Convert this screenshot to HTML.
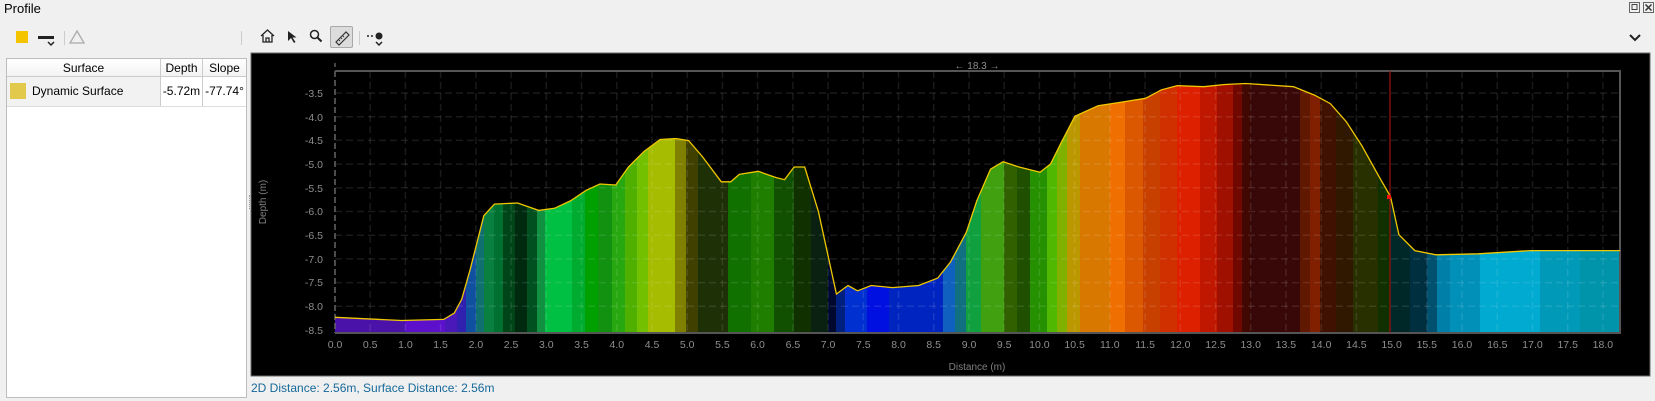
<!DOCTYPE html>
<html><head><meta charset="utf-8"><style>
*{margin:0;padding:0;box-sizing:border-box}
body{width:1655px;height:401px;background:#f0f0f0;font-family:"Liberation Sans","DejaVu Sans",sans-serif;position:relative;overflow:hidden;font-size:12px;color:#000}
.a{position:absolute}
</style></head><body>
<div class="a" style="left:4px;top:1px;font-size:13px">Profile</div>
<svg class="a" style="left:1628px;top:2px" width="27" height="12"><rect x="1.5" y="0.5" width="10" height="10" fill="none" stroke="#666"/><rect x="4" y="2.5" width="5" height="5" fill="none" stroke="#444"/><rect x="15.5" y="0.5" width="10" height="10" fill="none" stroke="#666"/><path d="M17.5 2.5l6 6M23.5 2.5l-6 6" stroke="#333" stroke-width="1.5"/></svg>
<div class="a" style="left:16px;top:31px;width:12px;height:12px;background:#f5c400"></div>
<svg class="a" style="left:38px;top:30px" width="20" height="18"><rect x="0" y="6" width="16" height="3" fill="#222"/><path d="M10 12l3 3 3-3" fill="none" stroke="#222" stroke-width="1.5"/></svg>
<div class="a" style="left:64px;top:31px;width:1px;height:14px;background:#ccc"></div>
<svg class="a" style="left:68px;top:29px" width="18" height="16"><path d="M9 2L16 14H2Z" fill="none" stroke="#aaa" stroke-width="1.3"/></svg>
<div class="a" style="left:241px;top:31px;width:1px;height:14px;background:#ccc"></div>
<svg class="a" style="left:259px;top:28px" width="18" height="16"><path d="M2 8L8.5 2 15 8M4 7v7h9V7M7 14v-4h3v4" fill="none" stroke="#222" stroke-width="1.3"/></svg>
<svg class="a" style="left:287px;top:30px" width="10" height="14"><path d="M1 1v10l3-3 3 5 1.5-1-3-4.5h4z" fill="#222"/></svg>
<svg class="a" style="left:309px;top:29px" width="14" height="14"><circle cx="5.5" cy="5.5" r="4" fill="none" stroke="#222" stroke-width="1.5"/><path d="M8.5 8.5l4 4" stroke="#222" stroke-width="2"/></svg>
<div class="a" style="left:330px;top:26px;width:23px;height:22px;background:#dcdcdc;border:1px solid #a8a8a8;border-radius:2px"></div>
<svg class="a" style="left:332px;top:28px" width="20" height="18"><path d="M4 14L14 4l3 3L7 17z" fill="none" stroke="#333" stroke-width="1.2"/><path d="M7 12l1 1M9 10l1 1M11 8l1 1" stroke="#333"/></svg>
<div class="a" style="left:359px;top:31px;width:1px;height:14px;background:#ccc"></div>
<svg class="a" style="left:366px;top:30px" width="26" height="20"><path d="M1 6h2M5 6h2" stroke="#222" stroke-width="1.5"/><circle cx="13" cy="6" r="3.5" fill="#222"/><path d="M10 12l3 3 3-3" fill="none" stroke="#222" stroke-width="1.5"/></svg>
<svg class="a" style="left:1628px;top:33px" width="14" height="10"><path d="M2 2l5 5 5-5" fill="none" stroke="#222" stroke-width="2"/></svg>
<div class="a" style="left:6px;top:58px;width:241px;height:340px;background:#fff;border:1px solid #bdbdbd"></div>
<div class="a" style="left:7px;top:59px;width:239px;height:18px;background:linear-gradient(#fff,#f3f3f3);border-bottom:1px solid #ccc"></div>
<div class="a" style="left:7px;top:61px;width:153px;text-align:center">Surface</div>
<div class="a" style="left:160px;top:59px;width:1px;height:47px;background:#ccc"></div>
<div class="a" style="left:160px;top:61px;width:43px;text-align:center">Depth</div>
<div class="a" style="left:202px;top:59px;width:1px;height:47px;background:#ccc"></div>
<div class="a" style="left:203px;top:61px;width:43px;text-align:center">Slope</div>
<div class="a" style="left:7px;top:77px;width:153px;height:29px;background:#f2f2f2"></div>
<div class="a" style="left:7px;top:106px;width:239px;height:1px;background:#ddd"></div>
<div class="a" style="left:10px;top:83px;width:16px;height:16px;background:#e2c94c"></div>
<div class="a" style="left:32px;top:84px">Dynamic Surface</div>
<div class="a" style="left:160px;top:84px;width:43px;text-align:center">-5.72m</div>
<div class="a" style="left:203px;top:84px;width:43px;text-align:center">-77.74°</div>
<div class="a" style="left:249px;top:195px;width:1px;height:14px;border-left:1px dotted #999"></div>
<div class="a" style="left:251px;top:381px;color:#17699a;font-size:12px">2D Distance: 2.56m, Surface Distance: 2.56m</div>
<svg class="a" style="left:0;top:0" width="1655" height="401" font-family="Liberation Sans, sans-serif">
<defs><clipPath id="c"><path d="M335,317.3 L401.5,320.5 443.7,319.4 454.3,313 461.7,299.3 470.1,269.7 483.8,215.7 494.4,204.1 517.6,203 538.7,210.4 554.5,208.3 570.4,200.9 586.2,190.3 599.9,184 615.8,185 628.4,167 644.3,151.2 660.1,139.5 675.9,138.5 688.6,140.6 702.3,156.5 721.3,181.8 730.8,181.8 739.3,174.4 758.2,171.3 776.2,177.6 784.6,179.7 794.1,167 804.7,167 818.4,211.5 836.4,294 848,285.5 857.5,290.8 871.2,285.5 892.3,287.6 918.7,285.5 937.7,278.1 950.4,262.2 966.2,232.6 976.8,200.9 990.5,169.2 1003.1,161.7 1019,167 1040.1,172.3 1050.6,163.9 1061.2,142.7 1074.9,116.3 1098.1,105.7 1119.2,102.5 1145.6,98.3 1161.5,89.8 1177.3,85.6 1203.7,86.7 1224.8,84.5 1245.9,83.5 1293.4,86.7 1314.5,95.1 1330.3,103.6 1346.2,121.6 1362,145.9 1377.8,174.4 1390.5,196.6 1398.9,234.7 1414.8,250.6 1435.9,254.8 1478.1,253.8 1530.9,250.6 1620,250.6 L1620,333 L335,333 Z"/></clipPath></defs>
<rect x="251" y="53" width="1399" height="323" fill="#000" stroke="#6a6a6a" stroke-width="1"/>
<g clip-path="url(#c)">
<rect x="335" y="70" width="70" height="264" fill="#4a12a8"/>
<rect x="405" y="70" width="40" height="264" fill="#5c10cc"/>
<rect x="445" y="70" width="12" height="264" fill="#4a18b8"/>
<rect x="457" y="70" width="9" height="264" fill="#3020b0"/>
<rect x="466" y="70" width="10" height="264" fill="#1050a0"/>
<rect x="476" y="70" width="8" height="264" fill="#107070"/>
<rect x="484" y="70" width="10" height="264" fill="#0a8040"/>
<rect x="494" y="70" width="9" height="264" fill="#007030"/>
<rect x="503" y="70" width="12" height="264" fill="#004518"/>
<rect x="515" y="70" width="12" height="264" fill="#002a10"/>
<rect x="527" y="70" width="10" height="264" fill="#005020"/>
<rect x="537" y="70" width="8" height="264" fill="#109040"/>
<rect x="545" y="70" width="27" height="264" fill="#00c044"/>
<rect x="572" y="70" width="13" height="264" fill="#00ac30"/>
<rect x="585" y="70" width="13" height="264" fill="#00a000"/>
<rect x="598" y="70" width="14" height="264" fill="#129010"/>
<rect x="612" y="70" width="13" height="264" fill="#28a810"/>
<rect x="625" y="70" width="12" height="264" fill="#50b000"/>
<rect x="637" y="70" width="11" height="264" fill="#72c000"/>
<rect x="648" y="70" width="27" height="264" fill="#a6bc00"/>
<rect x="675" y="70" width="11" height="264" fill="#808000"/>
<rect x="686" y="70" width="12" height="264" fill="#404000"/>
<rect x="698" y="70" width="30" height="264" fill="#1e3006"/>
<rect x="728" y="70" width="23" height="264" fill="#107000"/>
<rect x="751" y="70" width="23" height="264" fill="#1f7e00"/>
<rect x="774" y="70" width="20" height="264" fill="#105000"/>
<rect x="794" y="70" width="17" height="264" fill="#103000"/>
<rect x="811" y="70" width="17" height="264" fill="#0a2010"/>
<rect x="828" y="70" width="8" height="264" fill="#000830"/>
<rect x="836" y="70" width="9" height="264" fill="#002080"/>
<rect x="845" y="70" width="22" height="264" fill="#0030d0"/>
<rect x="867" y="70" width="22" height="264" fill="#0010e0"/>
<rect x="889" y="70" width="54" height="264" fill="#0024c0"/>
<rect x="943" y="70" width="12" height="264" fill="#1060c0"/>
<rect x="955" y="70" width="11" height="264" fill="#107080"/>
<rect x="966" y="70" width="15" height="264" fill="#10a040"/>
<rect x="981" y="70" width="23" height="264" fill="#40a010"/>
<rect x="1004" y="70" width="13" height="264" fill="#306000"/>
<rect x="1017" y="70" width="13" height="264" fill="#1e5000"/>
<rect x="1030" y="70" width="17" height="264" fill="#259000"/>
<rect x="1047" y="70" width="10" height="264" fill="#50b800"/>
<rect x="1057" y="70" width="10" height="264" fill="#80b000"/>
<rect x="1067" y="70" width="13" height="264" fill="#bc9800"/>
<rect x="1080" y="70" width="30" height="264" fill="#d87800"/>
<rect x="1110" y="70" width="15" height="264" fill="#ef7000"/>
<rect x="1125" y="70" width="18" height="264" fill="#dc5800"/>
<rect x="1143" y="70" width="17" height="264" fill="#c84000"/>
<rect x="1160" y="70" width="17" height="264" fill="#d03000"/>
<rect x="1177" y="70" width="23" height="264" fill="#dc2000"/>
<rect x="1200" y="70" width="17" height="264" fill="#c01800"/>
<rect x="1217" y="70" width="16" height="264" fill="#a01000"/>
<rect x="1233" y="70" width="9" height="264" fill="#700800"/>
<rect x="1242" y="70" width="8" height="264" fill="#400800"/>
<rect x="1250" y="70" width="50" height="264" fill="#380808"/>
<rect x="1300" y="70" width="10" height="264" fill="#601800"/>
<rect x="1310" y="70" width="10" height="264" fill="#802000"/>
<rect x="1320" y="70" width="16" height="264" fill="#401000"/>
<rect x="1336" y="70" width="17" height="264" fill="#301800"/>
<rect x="1353" y="70" width="25" height="264" fill="#283000"/>
<rect x="1378" y="70" width="12" height="264" fill="#103000"/>
<rect x="1390" y="70" width="20" height="264" fill="#002828"/>
<rect x="1410" y="70" width="17" height="264" fill="#003040"/>
<rect x="1427" y="70" width="10" height="264" fill="#005070"/>
<rect x="1437" y="70" width="13" height="264" fill="#0080a8"/>
<rect x="1450" y="70" width="30" height="264" fill="#0090b8"/>
<rect x="1480" y="70" width="60" height="264" fill="#00aad0"/>
<rect x="1540" y="70" width="40" height="264" fill="#009ab8"/>
<rect x="1580" y="70" width="40" height="264" fill="#0094aa"/>
</g>
<g stroke="rgba(255,255,255,0.1)" stroke-width="1.5" stroke-dasharray="7,4">
<path d="M370.2 71V333M405.4 71V333M440.6 71V333M475.9 71V333M511.1 71V333M546.3 71V333M581.5 71V333M616.8 71V333M652 71V333M687.2 71V333M722.4 71V333M757.6 71V333M792.9 71V333M828.1 71V333M863.3 71V333M898.5 71V333M933.7 71V333M969 71V333M1004.2 71V333M1039.4 71V333M1074.6 71V333M1109.8 71V333M1145.1 71V333M1180.3 71V333M1215.5 71V333M1250.7 71V333M1285.9 71V333M1321.2 71V333M1356.4 71V333M1426.8 71V333M1462 71V333M1497.3 71V333M1532.5 71V333M1567.7 71V333M1602.9 71V333"/>
<path d="M335 93H1620M335 116.7H1620M335 140.4H1620M335 164.1H1620M335 187.8H1620M335 211.5H1620M335 235.2H1620M335 258.9H1620M335 282.6H1620M335 306.3H1620"/>
</g>
<path d="M335 71V333" stroke="#666" stroke-width="1.5" stroke-dasharray="6,3"/>
<path d="M335 71H1620V333H335" fill="none" stroke="#555" stroke-width="2"/>
<path d="M335 63V67" stroke="#888"/>
<path d="M1390 71V333" stroke="#a01010" stroke-width="1.2"/>
<path d="M335,317.3 L401.5,320.5 443.7,319.4 454.3,313 461.7,299.3 470.1,269.7 483.8,215.7 494.4,204.1 517.6,203 538.7,210.4 554.5,208.3 570.4,200.9 586.2,190.3 599.9,184 615.8,185 628.4,167 644.3,151.2 660.1,139.5 675.9,138.5 688.6,140.6 702.3,156.5 721.3,181.8 730.8,181.8 739.3,174.4 758.2,171.3 776.2,177.6 784.6,179.7 794.1,167 804.7,167 818.4,211.5 836.4,294 848,285.5 857.5,290.8 871.2,285.5 892.3,287.6 918.7,285.5 937.7,278.1 950.4,262.2 966.2,232.6 976.8,200.9 990.5,169.2 1003.1,161.7 1019,167 1040.1,172.3 1050.6,163.9 1061.2,142.7 1074.9,116.3 1098.1,105.7 1119.2,102.5 1145.6,98.3 1161.5,89.8 1177.3,85.6 1203.7,86.7 1224.8,84.5 1245.9,83.5 1293.4,86.7 1314.5,95.1 1330.3,103.6 1346.2,121.6 1362,145.9 1377.8,174.4 1390.5,196.6 1398.9,234.7 1414.8,250.6 1435.9,254.8 1478.1,253.8 1530.9,250.6 1620,250.6" fill="none" stroke="#f0c800" stroke-width="1.3"/>
<rect x="1387" y="195" width="4" height="4" fill="#ff1010"/>
<g fill="#8e8e8e" font-size="10.5" text-anchor="end">
<text x="323" y="97">-3.5</text><text x="323" y="121">-4.0</text><text x="323" y="144">-4.5</text><text x="323" y="168">-5.0</text><text x="323" y="192">-5.5</text><text x="323" y="215">-6.0</text><text x="323" y="239">-6.5</text><text x="323" y="263">-7.0</text><text x="323" y="286">-7.5</text><text x="323" y="310">-8.0</text><text x="323" y="334">-8.5</text>
</g>
<g fill="#8e8e8e" font-size="10.5" text-anchor="middle">
<text x="335" y="348">0.0</text><text x="370.2" y="348">0.5</text><text x="405.4" y="348">1.0</text><text x="440.6" y="348">1.5</text><text x="475.9" y="348">2.0</text><text x="511.1" y="348">2.5</text><text x="546.3" y="348">3.0</text><text x="581.5" y="348">3.5</text><text x="616.8" y="348">4.0</text><text x="652" y="348">4.5</text><text x="687.2" y="348">5.0</text><text x="722.4" y="348">5.5</text><text x="757.6" y="348">6.0</text><text x="792.9" y="348">6.5</text><text x="828.1" y="348">7.0</text><text x="863.3" y="348">7.5</text><text x="898.5" y="348">8.0</text><text x="933.7" y="348">8.5</text><text x="969" y="348">9.0</text><text x="1004.2" y="348">9.5</text><text x="1039.4" y="348">10.0</text><text x="1074.6" y="348">10.5</text><text x="1109.8" y="348">11.0</text><text x="1145.1" y="348">11.5</text><text x="1180.3" y="348">12.0</text><text x="1215.5" y="348">12.5</text><text x="1250.7" y="348">13.0</text><text x="1285.9" y="348">13.5</text><text x="1321.2" y="348">14.0</text><text x="1356.4" y="348">14.5</text><text x="1391.6" y="348">15.0</text><text x="1426.8" y="348">15.5</text><text x="1462" y="348">16.0</text><text x="1497.3" y="348">16.5</text><text x="1532.5" y="348">17.0</text><text x="1567.7" y="348">17.5</text><text x="1602.9" y="348">18.0</text>
<text x="977" y="69" font-size="10">← 18.3 →</text>
<text x="977" y="370" font-size="10" fill="#808080">Distance (m)</text>
<text x="0" y="0" font-size="10" fill="#808080" transform="translate(266,202) rotate(-90)">Depth (m)</text>
</g>
</svg>
</body></html>
